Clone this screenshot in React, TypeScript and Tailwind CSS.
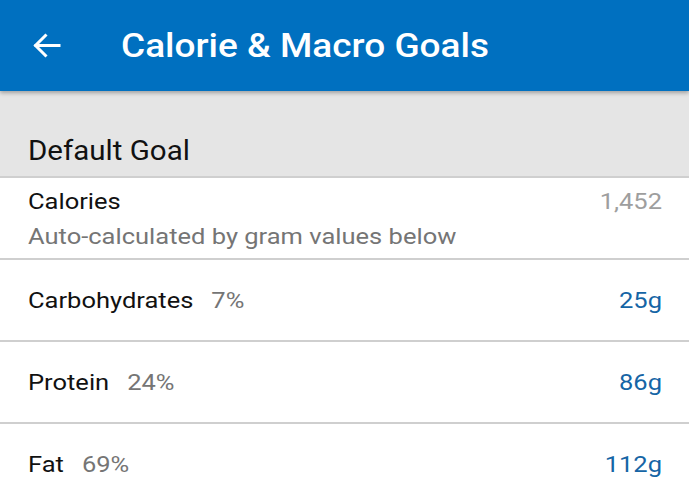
import React from "react";

const sq = "inline-block scale-y-[0.89]";

function Row({ label, pct, value }: { label: string; pct: string; value: string }) {
  return (
    <div className="flex h-[82px] items-center justify-between border-b-2 border-[#cfcfcf] bg-white pl-[28px] pr-[27px]">
      <div className="flex items-center text-[25.5px] leading-[30px]">
        <span className={`${sq} text-[#111111]`}>{label}</span>
        <span className={`${sq} ml-[18px] text-[#757575]`}>{pct}</span>
      </div>
      <span className={`${sq} text-[25.5px] leading-[30px] text-[#1565a5]`}>{value}</span>
    </div>
  );
}

export default function App() {
  return (
    <div className="h-[500px] w-[689px] overflow-hidden bg-white" style={{ fontFamily: "Roboto, 'Noto Sans', sans-serif" }}>
      <div className="relative z-10 flex h-[91px] items-center bg-[#0070c0] shadow-[0_2px_4px_rgba(0,0,0,0.3)]">
        <svg className="ml-[33px] h-[28px] w-[28px]" viewBox="0 0 28 28" fill="none" stroke="white" strokeWidth="3" strokeLinecap="square">
          <path d="M3 13.5H26" />
          <path d="M13.5 2.5L2.5 13.5L13.5 24.5" strokeLinecap="butt" />
        </svg>
        <span className={`${sq} ml-[60px] text-[37px] leading-[44px] font-medium text-white`}>Calorie &amp; Macro Goals</span>
      </div>
      <div className="flex h-[87px] items-end border-b-2 border-[#cfcfcf] bg-[#e5e5e5] pb-[9px] pl-[28px]">
        <span className="inline-block scale-y-[0.95] text-[29.5px] leading-[34px] text-[#111111]">Default Goal</span>
      </div>
      <div className="flex h-[82px] flex-col justify-center border-b-2 border-[#cfcfcf] bg-white pl-[28px] pr-[27px]">
        <div className="flex items-center justify-between text-[25.5px] leading-[30px]">
          <span className={`${sq} text-[#111111]`}>Calories</span>
          <span className={`${sq} text-[#9e9e9e]`}>1,452</span>
        </div>
        <span className={`${sq} mt-[5px] text-[25.5px] leading-[30px] text-[#757575]`}>Auto-calculated by gram values below</span>
      </div>
      <Row label="Carbohydrates" pct="7%" value="25g" />
      <Row label="Protein" pct="24%" value="86g" />
      <Row label="Fat" pct="69%" value="112g" />
    </div>
  );
}
